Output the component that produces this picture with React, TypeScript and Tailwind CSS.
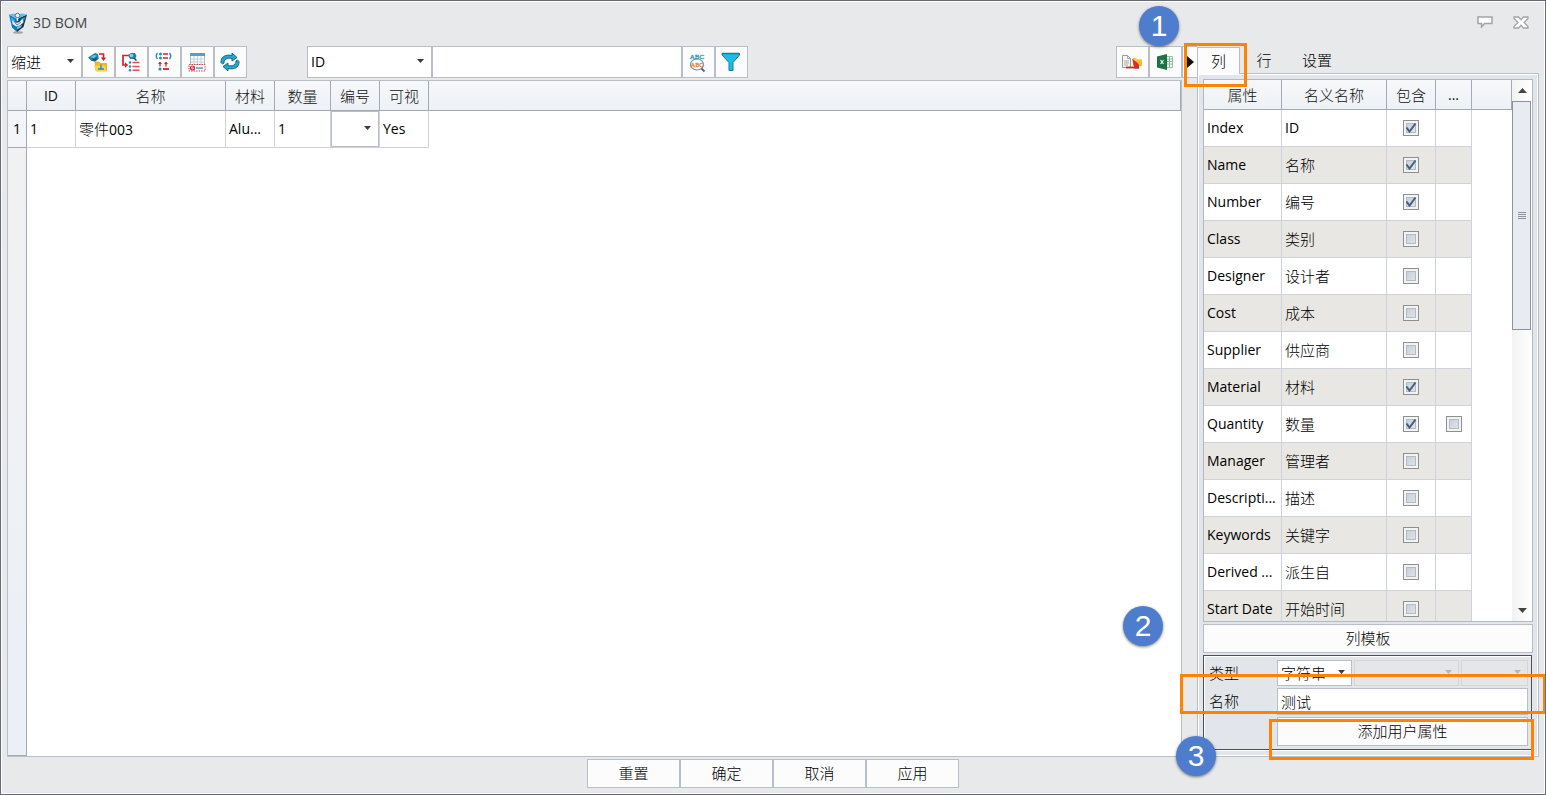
import type { ReactNode } from "react";
import clsx from "clsx";

const LATIN = "font-['Open_Sans','Noto_Sans_CJK_SC',sans-serif] text-sm";
const CJK = "font-['Noto_Sans_CJK_SC',sans-serif] text-[15px] font-light";

const headerFill = "bg-linear-to-b from-[#f7f8fa] to-[#edf1f5]";

type Attribute = {
  name: string;
  label: string;
  included: boolean;
  total?: boolean;
  latin?: boolean;
};

const attributes: Attribute[] = [
  { name: "Index", label: "ID", included: true, latin: true },
  { name: "Name", label: "名称", included: true },
  { name: "Number", label: "编号", included: true },
  { name: "Class", label: "类别", included: false },
  { name: "Designer", label: "设计者", included: false },
  { name: "Cost", label: "成本", included: false },
  { name: "Supplier", label: "供应商", included: false },
  { name: "Material", label: "材料", included: true },
  { name: "Quantity", label: "数量", included: true, total: false },
  { name: "Manager", label: "管理者", included: false },
  { name: "Descripti...", label: "描述", included: false },
  { name: "Keywords", label: "关键字", included: false },
  { name: "Derived ...", label: "派生自", included: false },
  { name: "Start Date", label: "开始时间", included: false },
];

function Logo() {
  return (
    <svg width="20" height="22" viewBox="0 0 20 22" aria-hidden="true">
      <ellipse cx="10" cy="20.500" rx="5" ry="1.200" fill="#777" opacity=".6" />
      <path d="M1 2.500L9 7v13L4 15.500z" fill="#1279b8" />
      <path d="M19 2.500L9 7v13l6.500-5z" fill="#14304a" />
      <path d="M1 2.500l5-1 3.500 1L14 1.500l5 1L9.500 7z" fill="#56c2ee" />
      <path d="M2.500 5l4 2.500v4L4 10z" fill="#3cb1e6" />
      <path d="M17.500 4.500l-5 2.500v3l4-2z" fill="#2f8fca" />
      <path d="M4 8.500l4 2.500 3-1 4-3 .5 3.500-3.500 3-4 1-3.500-2.500z" fill="#dfeef6" />
      <path d="M6.500 10l2.500 3 4-3" fill="none" stroke="#4c6c82" strokeWidth=".8" />
      <path d="M9 14.500l5-1.500-1 2.500-4 2z" fill="#7db8d9" />
      <circle cx="9.500" cy="3.500" r="2.200" fill="#eef3f5" stroke="#5b6870" strokeWidth=".9" />
      <path d="M9.500 6v3" stroke="#eef3f5" strokeWidth="1.500" />
    </svg>
  );
}

function ImportIcon() {
  return (
    <svg width="20" height="20" viewBox="0 0 20 20" aria-hidden="true">
      <path d="M0 5.500L4 3l3-2 3 1 .8 4.500L7 9.500 3 8.500z" fill="#1f7fa3" />
      <path d="M2 5.500L6 3l3 .5-3 2.500z" fill="#74bfd8" />
      <path d="M3 8.500l4-2.500 3 1-3 2.500z" fill="#155a78" />
      <path d="M11 2h4.500v4" fill="none" stroke="#d2232a" strokeWidth="1.600" />
      <path d="M12.800 5.500h5.400L15.500 9z" fill="#d2232a" />
      <path d="M7 10h4l1 1.500h6.500V19H8z" fill="#f2b81f" stroke="#d6961a" strokeWidth=".6" />
      <path d="M6 13.500h11l1.500 5.500H8z" fill="#fbd34c" />
      <path d="M10 17h6M13 12.500V17" stroke="#2a8fb0" strokeWidth="1.400" />
    </svg>
  );
}

function TreeIcon() {
  return (
    <svg width="20" height="20" viewBox="0 0 20 20" aria-hidden="true">
      <path d="M8 3.500H2V13h2.500" fill="none" stroke="#d2232a" strokeWidth="1.700" />
      <path d="M4 10.300l3.200 2.700L4 15.700z" fill="#d2232a" />
      <path d="M7 3l3-2h4l1.500 3L14 7H9z" fill="#267fa6" />
      <circle cx="10.500" cy="3.500" r="1.800" fill="#8dd0e6" />
      <path d="M13 6l2.500 2.500" stroke="#174e69" strokeWidth="1.500" />
      <circle cx="9" cy="10.500" r="1.300" fill="#2a8fb0" />
      <circle cx="9" cy="14.500" r="1.300" fill="#2a8fb0" />
      <circle cx="9" cy="18.300" r="1.300" fill="#2a8fb0" />
      <path d="M11.500 10.500h7M11.500 14.500h7M11.500 18.300h7" stroke="#e0504f" strokeWidth="1.500" />
    </svg>
  );
}

function GroupIcon() {
  return (
    <svg width="18" height="20" viewBox="0 0 18 20" aria-hidden="true">
      <path d="M2.500 1Q0 4 2.500 7M14.500 1Q17 4 14.500 7" fill="none" stroke="#2a8fb0" strokeWidth="1.400" />
      <circle cx="5.500" cy="2" r="1.500" fill="#2a8fb0" />
      <circle cx="5.500" cy="6" r="1.500" fill="#2a8fb0" />
      <path d="M8 2h5M8 6h5" stroke="#d2232a" strokeWidth="1.600" />
      <path d="M5 10.500v4M11 10.500v4" stroke="#d2232a" strokeWidth="1.300" />
      <path d="M3 12l2-2.500L7 12zM9 12l2-2.500 2 2.500z" fill="#d2232a" />
      <circle cx="5" cy="17" r="1.600" fill="#2a8fb0" />
      <path d="M8 17h6" stroke="#d2232a" strokeWidth="1.800" />
    </svg>
  );
}

function SheetIcon() {
  return (
    <svg width="18" height="20" viewBox="0 0 18 20" aria-hidden="true">
      <path d="M2.500 1.500h14v11h-14z" fill="#fff" stroke="#9dbccb" />
      <path d="M2 1h15v3H2z" fill="#4ba3c7" />
      <path d="M2.500 7h14M2.500 10h14M6 4v9M9.500 4v9M13 4v9" stroke="#c3d1d9" />
      <path d="M1 12.500h16v6.500H1z" fill="#fff" stroke="#d8474c" strokeDasharray="1.500 1" />
      <circle cx="4.500" cy="16" r="2" fill="none" stroke="#c4232a" strokeWidth="1.200" />
      <path d="M3 17.500l3-3" stroke="#c4232a" />
      <path d="M8 16h7" stroke="#5aa2c4" strokeWidth="1.600" />
    </svg>
  );
}

function RefreshIcon() {
  return (
    <svg width="20" height="20" viewBox="0 0 20 20" aria-hidden="true">
      <path
        d="M1 10.500C.5 5 5.500 2 12 3.500V1l5 4.500L12 9V6.500C7.500 5.500 4 7 4 11l-1.500 1z"
        fill="#22a7cd"
        stroke="#0d5f7c"
        strokeWidth=".9"
      />
      <path
        d="M19 9.500C19.500 15 14.500 18 8 16.500V19l-5-4.500L8 11v2.500c4.500 1 8-.5 8-4.500l1.500-1z"
        fill="#22a7cd"
        stroke="#0d5f7c"
        strokeWidth=".9"
      />
    </svg>
  );
}

function FindIcon() {
  return (
    <svg width="20" height="22" viewBox="0 0 20 22" aria-hidden="true">
      <ellipse cx="9" cy="13.500" rx="6.500" ry="5.500" fill="#fff" stroke="#8a8a8a" strokeWidth="1.200" />
      <path d="M13.500 17.500l3 3" stroke="#3a7388" strokeWidth="2" />
      <g fontFamily="Liberation Serif, serif" textAnchor="middle">
        <text x="9" y="8" fontSize="7" fill="#2b93b5" stroke="#2b93b5" strokeWidth=".3">
          ABC
        </text>
        <text x="9" y="16" fontSize="6" fill="#df7f3a" stroke="#df7f3a" strokeWidth=".3">
          ABC
        </text>
      </g>
    </svg>
  );
}

function FilterIcon() {
  return (
    <svg width="20" height="20" viewBox="0 0 20 20" aria-hidden="true">
      <path d="M1 1.500h17.500V3L12 10.500v8H8v-8L1 3z" fill="#1fbbe0" stroke="#147f9f" />
      <path d="M1 1.500h17.500" stroke="#147f9f" strokeWidth="1.500" />
    </svg>
  );
}

function ExportIcon() {
  return (
    <svg width="20" height="16" viewBox="0 0 20 16" aria-hidden="true">
      <path d="M.5 1.500h5l3 3v9h-8z" fill="#f4f4f4" stroke="#999" />
      <path d="M5.500 1.500v3h3M2 7h5M2 9h5M2 11h4" fill="none" stroke="#aaa" />
      <path d="M11 4h3l1 1h5v7h-9z" fill="#f5bd26" />
      <path d="M12 5h8v2h-8z" fill="#fbd765" />
      <path d="M4 13.500h13" stroke="#d2232a" strokeWidth="1.800" />
      <path d="M10 4.500l7 5.500v4.500h-4.500z" fill="#d2232a" opacity=".9" />
      <path d="M14 6h5v5h-2z" fill="#f5bd26" />
    </svg>
  );
}

function ExcelIcon() {
  return (
    <svg width="18" height="16" viewBox="0 0 18 16" aria-hidden="true">
      <path d="M10 2.500h6.500v11H10z" fill="#fff" stroke="#8fc3a5" />
      <path d="M11 5h5M11 7.500h5M11 10h5M13.500 3v10" stroke="#7dbb97" />
      <path d="M1 2.500L11 0v16L1 13.500z" fill="#1f7244" />
      <path d="M4.500 6l3 4M7.500 6l-3 4" stroke="#fff" strokeWidth="1.100" />
    </svg>
  );
}

function Caret({ faded = false, className }: { faded?: boolean; className?: string }) {
  return (
    <svg
      width="7"
      height="4"
      viewBox="0 0 7 4"
      aria-hidden="true"
      className={clsx("pointer-events-none absolute", className)}
    >
      <path d="M0 0h7L3.500 4z" fill={faded ? "#b5b8bb" : "#3c3c3c"} />
    </svg>
  );
}

function Combo({
  label,
  options,
  className,
  caret = "right-[8px] top-[13px]",
  disabled = false,
  latin = false,
}: {
  label: string;
  options: string[];
  className: string;
  caret?: string;
  disabled?: boolean;
  latin?: boolean;
}) {
  return (
    <div className={clsx("relative", className)}>
      <select
        aria-label={label}
        disabled={disabled}
        className={clsx(
          "h-full w-full appearance-none border pl-[3px] outline-none",
          latin ? LATIN : CJK,
          disabled ? "border-[#d3d7da] bg-[#e4e6e8]" : "border-[#b9bfc8] bg-white text-black",
        )}
      >
        {options.map((option) => (
          <option key={option}>{option}</option>
        ))}
      </select>
      <Caret faded={disabled} className={caret} />
    </div>
  );
}

function ToolButton({ label, children }: { label: string; children: ReactNode }) {
  return (
    <button
      type="button"
      aria-label={label}
      className="flex h-8 w-[33px] shrink-0 items-center justify-center border border-[#b9bfc8] bg-[#fcfcfc] pr-px"
    >
      {children}
    </button>
  );
}

function Check({ label, checked }: { label: string; checked: boolean }) {
  return (
    <span className="relative mx-auto block size-4">
      <input
        type="checkbox"
        aria-label={label}
        defaultChecked={checked}
        className="peer block size-4 appearance-none border border-[#8e8f8f] bg-linear-to-br from-[#c3cad3] to-[#e6e9ed] shadow-[inset_0_0_0_2px_#f1f3f4,inset_0_0_0_3px_#b3bbc5]"
      />
      <svg
        width="16"
        height="16"
        viewBox="0 0 16 16"
        aria-hidden="true"
        className="pointer-events-none absolute inset-0 hidden peer-checked:block"
      >
        <path d="M3.500 7.500l3 4 6-8" fill="none" stroke="#45607f" strokeWidth="2" />
      </svg>
    </span>
  );
}

function TitleBar() {
  return (
    <header className="flex h-11 shrink-0 items-center pr-[16px] pl-[7px]">
      <Logo />
      <h1 className={clsx("ml-[5px] flex-1 text-[#444]", LATIN)}>3D BOM</h1>
      <button type="button" aria-label="反馈" className="mr-[20px] mb-[3px]">
        <svg width="16" height="12" viewBox="0 0 16 12" aria-hidden="true">
          <path d="M1 1h14v6.500H7.500L4.500 11V7.500H1z" fill="#fff" stroke="#a2a4a6" strokeWidth="1.500" />
        </svg>
      </button>
      <button type="button" aria-label="关闭" className="mb-[2px]">
        <svg width="16" height="13" viewBox="0 0 16 13" aria-hidden="true">
          <path
            d="M1 1h4.500L8 3.800 10.500 1H15v1.500l-4 4 4 4V12h-4.500L8 9.200 5.500 12H1v-1.500l4-4-4-4z"
            fill="#fff"
            stroke="#a2a4a6"
            strokeWidth="1.300"
          />
        </svg>
      </button>
    </header>
  );
}

function Toolbar() {
  return (
    <div className="flex h-8 shrink-0">
      <Combo label="显示方式" options={["缩进"]} className="h-8 w-[75px]" />
      <ToolButton label="导入"><ImportIcon /></ToolButton>
      <ToolButton label="展开"><TreeIcon /></ToolButton>
      <ToolButton label="分组"><GroupIcon /></ToolButton>
      <ToolButton label="表格"><SheetIcon /></ToolButton>
      <ToolButton label="刷新"><RefreshIcon /></ToolButton>
      <Combo label="查找列" options={["ID"]} className="ml-[60px] h-8 w-[125px]" latin />
      <input
        type="text"
        aria-label="查找内容"
        className={clsx("h-8 w-[250px] border border-[#b9bfc8] bg-white px-1 outline-none", CJK)}
      />
      <ToolButton label="查找"><FindIcon /></ToolButton>
      <ToolButton label="筛选"><FilterIcon /></ToolButton>
      <div className="flex-1" />
      <ToolButton label="导出"><ExportIcon /></ToolButton>
      <ToolButton label="导出 Excel"><ExcelIcon /></ToolButton>
      <button
        type="button"
        aria-label="更多"
        className="flex h-8 w-[15px] items-center justify-center border border-r-0 border-[#b9bfc8] bg-[#fcfcfc]"
      >
        <svg width="7" height="12" viewBox="0 0 7 12" aria-hidden="true">
          <path d="M0 0l7 6-7 6z" fill="#111" />
        </svg>
      </button>
    </div>
  );
}

const bomHead = clsx("border-r border-b border-[#a3a9b5] p-0 text-center font-normal text-[#111]", headerFill);
const bomCell = "whitespace-nowrap border-r border-b border-[#cfd2dc] p-0 pl-[3px] text-black";

function BomTable() {
  return (
    <div className="mt-[2px] mr-[15px] flex flex-1 flex-col border border-[#b9bfc8] bg-white">
      <table className="w-full table-fixed border-separate border-spacing-0">
        <colgroup>
          <col className="w-[19px]" />
          <col className="w-[49px]" />
          <col className="w-[150px]" />
          <col className="w-[49px]" />
          <col className="w-[56px]" />
          <col className="w-[49px]" />
          <col className="w-[49px]" />
          <col />
        </colgroup>
        <thead>
          <tr className="h-[30px]">
            <th className={bomHead} />
            <th className={clsx(bomHead, LATIN, "text-[#1d3557]")}>ID</th>
            {["名称", "材料", "数量", "编号", "可视"].map((title) => (
              <th key={title} className={bomHead}>
                <span className={CJK}>{title}</span>
              </th>
            ))}
            <th className={bomHead} />
          </tr>
        </thead>
        <tbody>
          <tr className="h-[37px]">
            <th className={clsx("border-r border-b border-[#a3a9b5] bg-[#f3f5f8] p-0 text-center font-normal", LATIN)}>
              1
            </th>
            <td className={clsx(bomCell, LATIN, "text-[#4a0810]")}>1</td>
            <td className={bomCell}>
              <span className={CJK}>零件</span>
              <span className={LATIN}>003</span>
            </td>
            <td className={clsx(bomCell, LATIN)}>Alu...</td>
            <td className={clsx(bomCell, LATIN, "text-[#4a0810]")}>1</td>
            <td className="border-r border-b border-[#cfd2dc] p-0">
              <Combo label="编号" options={[""]} className="h-9 w-full" caret="right-[8px] top-[15px]" />
            </td>
            <td className={clsx(bomCell, LATIN)}>Yes</td>
            <td />
          </tr>
        </tbody>
      </table>
      <div className="w-[19px] flex-1 border-r border-b border-[#a3a9b5] bg-linear-to-b from-[#f1f1f2] to-[#ebf0f7]" />
    </div>
  );
}

function Tabs() {
  return (
    <div role="tablist" className={clsx("flex h-[27px] text-black", CJK)}>
      <button
        type="button"
        role="tab"
        aria-selected="true"
        className="relative z-10 mt-px h-[27px] w-[43px] border border-b-0 border-[#b9bfc8] bg-[#fcfcfc]"
      >
        列
      </button>
      <button type="button" role="tab" aria-selected="false" className="mt-[2px] w-[48px]">
        行
      </button>
      <button type="button" role="tab" aria-selected="false" className="mt-[2px] w-[58px]">
        设置
      </button>
    </div>
  );
}

const attrHead = clsx("border-r border-b border-[#a3a9b5] p-0 text-center font-normal text-[#111]", headerFill);
const attrCell = "whitespace-nowrap border-r border-b border-[#cdd2dc] p-0 pl-[3px] text-black";

function AttributeList() {
  return (
    <div className="flex min-h-0 flex-1 border border-[#b3b9c3] bg-white">
      <div className="h-full min-w-0 flex-1 overflow-hidden">
        <table className="w-full table-fixed border-separate border-spacing-0">
          <colgroup>
            <col className="w-[78px]" />
            <col className="w-[105px]" />
            <col className="w-[49px]" />
            <col className="w-[36px]" />
            <col />
          </colgroup>
          <thead>
            <tr className="h-[30px]">
              {["属性", "名义名称", "包含"].map((title) => (
                <th key={title} className={attrHead}>
                  <span className={CJK}>{title}</span>
                </th>
              ))}
              <th className={clsx(attrHead, LATIN)}>...</th>
              <th className={attrHead} />
            </tr>
          </thead>
          <tbody>
            {attributes.map((attribute, index) => {
              const fill = index % 2 === 1 ? "bg-[#e9e7e3]" : "bg-white";
              return (
                <tr key={attribute.name} className="h-[37px]">
                  <td className={clsx(attrCell, fill, LATIN)}>{attribute.name}</td>
                  <td className={clsx(attrCell, fill, attribute.latin ? LATIN : CJK)}>{attribute.label}</td>
                  <td className={clsx("border-r border-b border-[#cdd2dc] p-0", fill)}>
                    <Check label={`${attribute.name} 包含`} checked={attribute.included} />
                  </td>
                  <td className={clsx("border-r border-b border-[#cdd2dc] p-0", fill)}>
                    {attribute.total !== undefined && (
                      <Check label={`${attribute.name} 合计`} checked={attribute.total} />
                    )}
                  </td>
                  <td />
                </tr>
              );
            })}
          </tbody>
        </table>
      </div>
      <div className="flex w-5 shrink-0 flex-col bg-linear-to-r from-[#f2f2f2] to-white">
        <button type="button" aria-label="向上滚动" className="flex h-[21px] items-center justify-center">
          <svg width="9" height="5" viewBox="0 0 9 5" aria-hidden="true">
            <path d="M0 5h9L4.500 0z" fill="#444" />
          </svg>
        </button>
        <div className="flex flex-1 flex-col">
          <div className="mr-px flex h-[46%] flex-col items-center justify-center gap-px border border-[#8d929c] bg-[#e8ecf2]">
            <i className="h-px w-2 bg-[#8d929c]" />
            <i className="h-px w-2 bg-[#8d929c]" />
            <i className="h-px w-2 bg-[#8d929c]" />
            <i className="h-px w-2 bg-[#8d929c]" />
          </div>
        </div>
        <button type="button" aria-label="向下滚动" className="flex h-[22px] items-center justify-center">
          <svg width="9" height="5" viewBox="0 0 9 5" aria-hidden="true">
            <path d="M0 0h9L4.500 5z" fill="#444" />
          </svg>
        </button>
      </div>
    </div>
  );
}

function UserAttributeForm() {
  return (
    <div
      className={clsx(
        "mt-[2px] mr-px grid grid-cols-[68px_1fr] border border-[#4d4f55] pt-1 pr-[3px] pb-[3px] pl-[5px] text-black shadow-[inset_1px_1px_0_#fff,0_1px_0_#fff]",
        CJK,
      )}
    >
      <span className="flex h-[26px] items-center">类型</span>
      <div className="flex gap-[2px]">
        <Combo label="类型" options={["字符串"]} className="h-[26px] w-[75px]" caret="right-[7px] top-[10px]" />
        <Combo label="单位类别" options={[""]} className="h-[26px] flex-1" caret="right-[7px] top-[10px]" disabled />
        <Combo label="单位" options={[""]} className="h-[26px] w-[67px]" caret="right-[7px] top-[10px]" disabled />
      </div>
      <label htmlFor="attribute-name" className="mt-[2px] flex h-[27px] items-center">
        名称
      </label>
      <input
        id="attribute-name"
        type="text"
        defaultValue="测试"
        className="mt-[2px] h-[27px] min-w-0 border border-[#b9bfc8] bg-white px-[3px] outline-none"
      />
      <button
        type="button"
        className="col-start-2 mt-[2px] h-[29px] border border-[#b9bfc8] bg-[#fcfcfc]"
      >
        添加用户属性
      </button>
    </div>
  );
}

function SidePanel() {
  return (
    <aside className="flex w-[342px] shrink-0 flex-col">
      <Tabs />
      <div className="flex min-h-0 flex-1 flex-col border border-[#b9bfc8] bg-[#e2e6ea] px-[5px] pt-[5px] pb-[6px] shadow-[inset_0_0_0_1px_#fff]">
        <AttributeList />
        <button
          type="button"
          className={clsx("mt-[2px] h-[29px] shrink-0 border border-[#b9bfc8] bg-[#fcfcfc] text-black", CJK)}
        >
          列模板
        </button>
        <UserAttributeForm />
      </div>
    </aside>
  );
}

function Marker({ step, className }: { step: number; className: string }) {
  return (
    <span
      className={clsx(
        "pointer-events-none absolute z-20 flex size-10 items-center justify-center rounded-full bg-[#4f7dcd] font-['Liberation_Sans',sans-serif] text-[30px] leading-none text-white shadow-[0_1px_3px_rgba(0,0,0,0.5)]",
        className,
      )}
    >
      {step}
    </span>
  );
}

function Highlight({ className }: { className: string }) {
  return <span className={clsx("pointer-events-none absolute z-20 border-3 border-[#ff8200]", className)} />;
}

export default function App() {
  return (
    <div className="relative flex h-screen flex-col overflow-hidden border border-[#656a74] bg-[#e8e9eb] shadow-[inset_0_0_0_1px_#fff]">
      <TitleBar />
      <main className="mt-px flex min-h-0 flex-1 pr-[6px] pl-[6px]">
        <section className="flex min-w-0 flex-1 flex-col">
          <Toolbar />
          <BomTable />
        </section>
        <SidePanel />
      </main>
      <footer className={clsx("mt-[2px] mb-[6px] flex shrink-0 justify-center text-black", CJK)}>
        {["重置", "确定", "取消", "应用"].map((action) => (
          <button
            key={action}
            type="button"
            className="h-[29px] w-[93px] border border-[#b9bfc8] bg-[#fcfcfc]"
          >
            {action}
          </button>
        ))}
      </footer>

      <Highlight className="top-[42px] right-[298px] h-[44px] w-[63px]" />
      <Highlight className="right-[-1px] bottom-[80px] h-[40px] w-[366px]" />
      <Highlight className="right-[11px] bottom-[34px] h-[41px] w-[265px]" />
      <Marker step={1} className="top-[5px] right-[366px]" />
      <Marker step={2} className="right-[382px] bottom-[148px]" />
      <Marker step={3} className="right-[329px] bottom-[18px]" />
    </div>
  );
}
